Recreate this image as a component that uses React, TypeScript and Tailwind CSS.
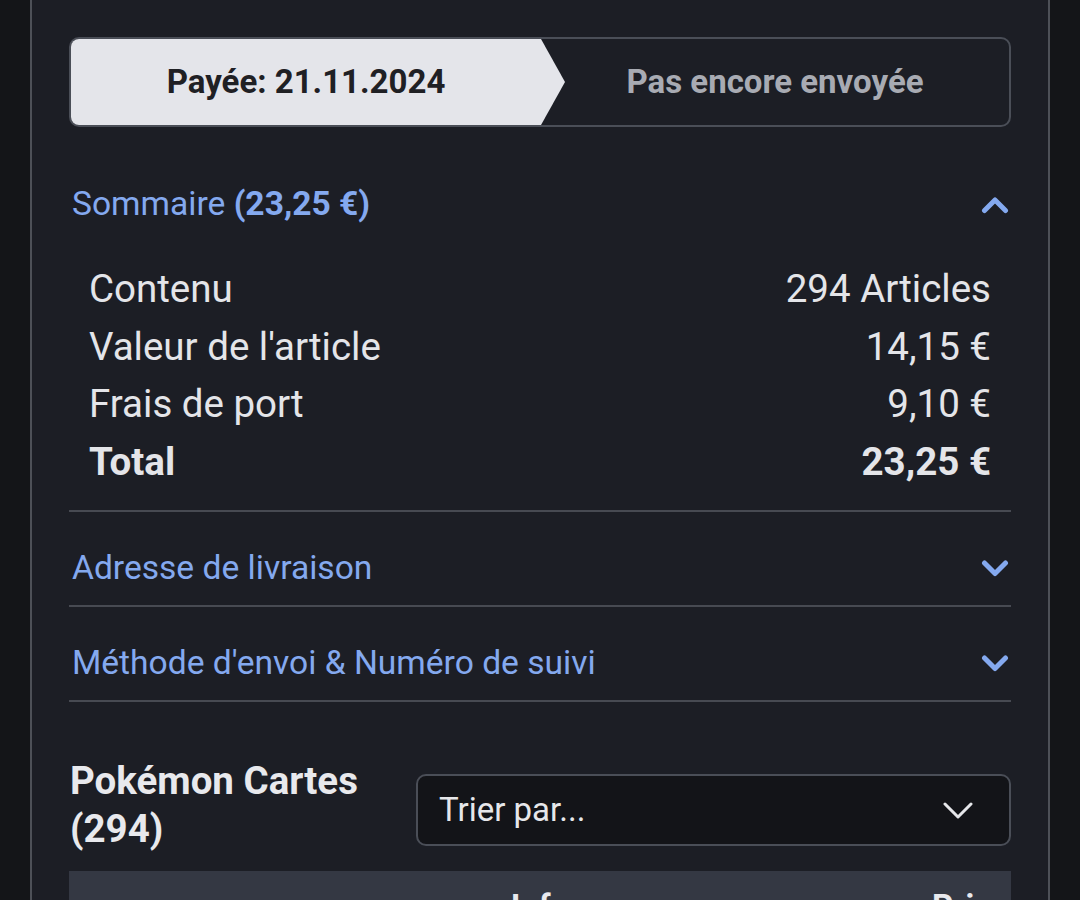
import React from "react";

const Chevron = ({ up }: { up?: boolean }) => (
  <svg width="28" height="19" viewBox="0 0 28 19" className="mr-[2px] shrink-0">
    <path
      d={up ? "M3.5 15.5 L14 5 L24.5 15.5" : "M3.5 4 L14 14.5 L24.5 4"}
      fill="none"
      stroke="#84a9ef"
      strokeWidth="5"
      strokeLinecap="round"
      strokeLinejoin="round"
    />
  </svg>
);

const Row = ({ label, value, bold }: { label: string; value: string; bold?: boolean }) => (
  <div className={`flex justify-between text-[38.5px] leading-[57.5px] ${bold ? "font-bold" : ""}`}>
    <span>{label}</span>
    <span>{value}</span>
  </div>
);

export default function App() {
  return (
    <div
      className="h-[900px] overflow-hidden bg-[#141518] px-[30px]"
      style={{ fontFamily: "Roboto, 'Noto Sans', sans-serif" }}
    >
      <div className="min-h-[900px] border-x-2 border-[#4d5057] bg-[#1c1e25] px-[37px] pt-[37px] text-[#e4e5e9]">
        {/* Stepper */}
        <div className="flex h-[90px] overflow-hidden rounded-[10px] border-2 border-[#4a4e57]">
          <div className="flex w-[494px] shrink-0 items-center justify-center bg-[#e4e5ea] pr-[24px] text-[33px] font-bold text-[#1f2024] [clip-path:polygon(0_0,470px_0,100%_50%,470px_100%,0_100%)]">
            Payée: 21.11.2024
          </div>
          <div className="-ml-[24px] flex flex-1 items-center justify-center text-[33px] font-bold text-[#a8abb3]">
            Pas encore envoyée
          </div>
        </div>

        {/* Sommaire */}
        <div className="mt-[21px] border-b-2 border-[#474a52]">
          <div className="flex h-[93px] items-center justify-between pl-[3px] pt-[20px] text-[33.6px] text-[#84a9ef]">
            <span>
              Sommaire <span className="font-bold">(23,25 €)</span>
            </span>
            <Chevron up />
          </div>
          <div className="px-[20px] pb-[20px] pt-[19px]">
            <Row label="Contenu" value="294 Articles" />
            <Row label="Valeur de l'article" value="14,15 €" />
            <Row label="Frais de port" value="9,10 €" />
            <Row label="Total" value="23,25 €" bold />
          </div>
        </div>

        <div className="flex h-[95px] items-center justify-between border-b-2 border-[#474a52] pl-[3px] pt-[20px] text-[33.6px] text-[#84a9ef]">
          <span>Adresse de livraison</span>
          <Chevron />
        </div>
        <div className="flex h-[95px] items-center justify-between border-b-2 border-[#474a52] pl-[3px] pt-[20px] text-[33.6px] text-[#84a9ef]">
          <span>Méthode d'envoi &amp; Numéro de suivi</span>
          <Chevron />
        </div>

        {/* Cards header */}
        <div className="mt-[55px] flex items-start">
          <div className="w-[347px] shrink-0 pl-[1px] text-[38.5px] font-bold leading-[47.5px] text-[#e8e9ed]">
            Pokémon Cartes
            <br />
            (294)
          </div>
          <div className="mt-[17px] flex h-[72px] flex-1 items-center justify-between rounded-[10px] border-2 border-[#4a4e57] bg-[#131418] pl-[21px] pr-[36px] text-[33px] text-[#e6e7ea]">
            <span>Trier par...</span>
            <svg width="30" height="17" viewBox="0 0 30 17">
              <path d="M2 2 L15 15 L28 2" fill="none" stroke="#e6e7ea" strokeWidth="3" strokeLinecap="round" strokeLinejoin="round" />
            </svg>
          </div>
        </div>

        <div className="mt-[19px] grid h-[80px] grid-cols-[1fr_auto_1fr] bg-[#343843] px-[20px] pt-[11px] text-[33px] font-bold leading-[49px] text-[#e8e9ed]">
          <span></span>
          <span>Info</span>
          <span className="justify-self-end">Prix</span>
        </div>
      </div>
    </div>
  );
}
